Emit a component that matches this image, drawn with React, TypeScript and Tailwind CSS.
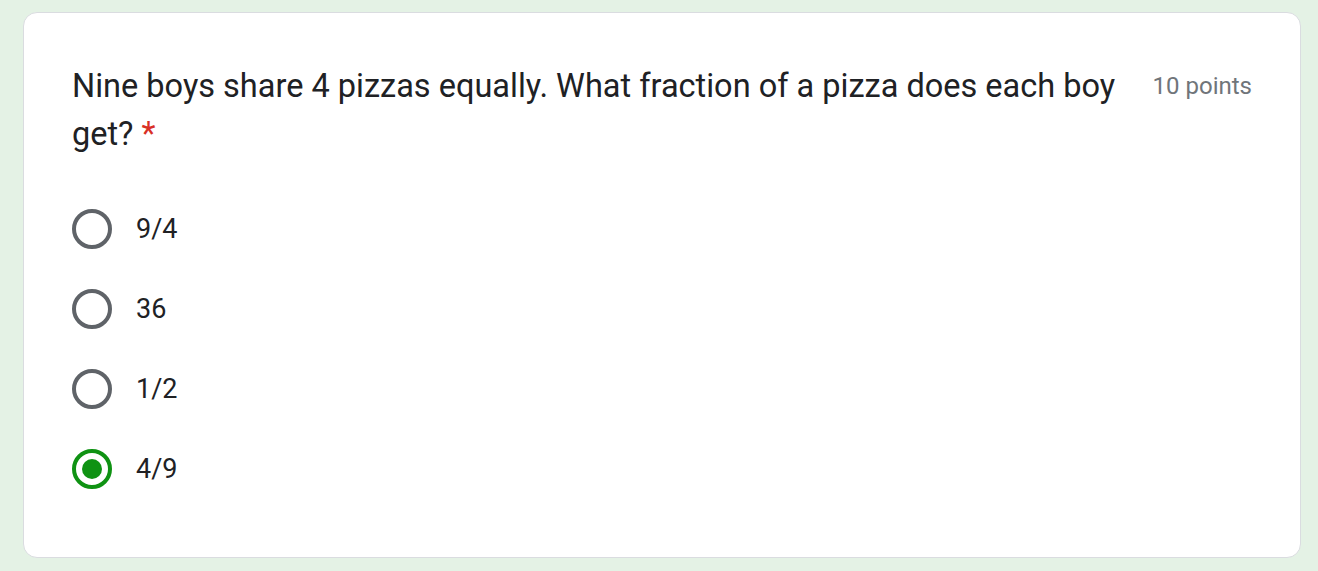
import { useState } from 'react'

const options = ['9/4', '36', '1/2', '4/9']

export default function App() {
  const [picked, setPicked] = useState('4/9')

  return (
    <div className="min-h-[571px] bg-[#e4f2e5] pl-[23px] pr-[17px] pt-[12px] pb-[13px]" style={{ fontFamily: 'Roboto, "Open Sans", sans-serif' }}>
      <div className="rounded-[14px] border border-[#dadce0] bg-white pl-[48px] pr-[48px] pt-[62px] pb-[44px] h-[546px]">
        <div className="flex items-start justify-between gap-[36px]">
          <div className="text-[32.5px] leading-[48px] text-[#202124] -mt-[13px]">
            Nine boys share 4 pizzas equally. What fraction of a pizza does each boy get?{' '}
            <span className="text-[#d93025]">*</span>
          </div>
          <div className="text-[24px] leading-[48px] text-[#70757a] whitespace-nowrap -mt-[13px]">10 points</div>
        </div>

        <div className="mt-[51px] flex flex-col gap-[40px]">
          {options.map((o) => {
            const on = picked === o
            return (
              <label key={o} className="flex items-center gap-[24px] h-[40px] cursor-pointer" onClick={() => setPicked(o)}>
                <span
                  className={`flex items-center justify-center w-[40px] h-[40px] rounded-full border-[4px] ${on ? 'border-[#0f9213]' : 'border-[#5f6368]'}`}
                >
                  {on && <span className="w-[20px] h-[20px] rounded-full bg-[#0f9213]" />}
                </span>
                <span className="text-[27px] text-[#202124]">{o}</span>
              </label>
            )
          })}
        </div>
      </div>
    </div>
  )
}
